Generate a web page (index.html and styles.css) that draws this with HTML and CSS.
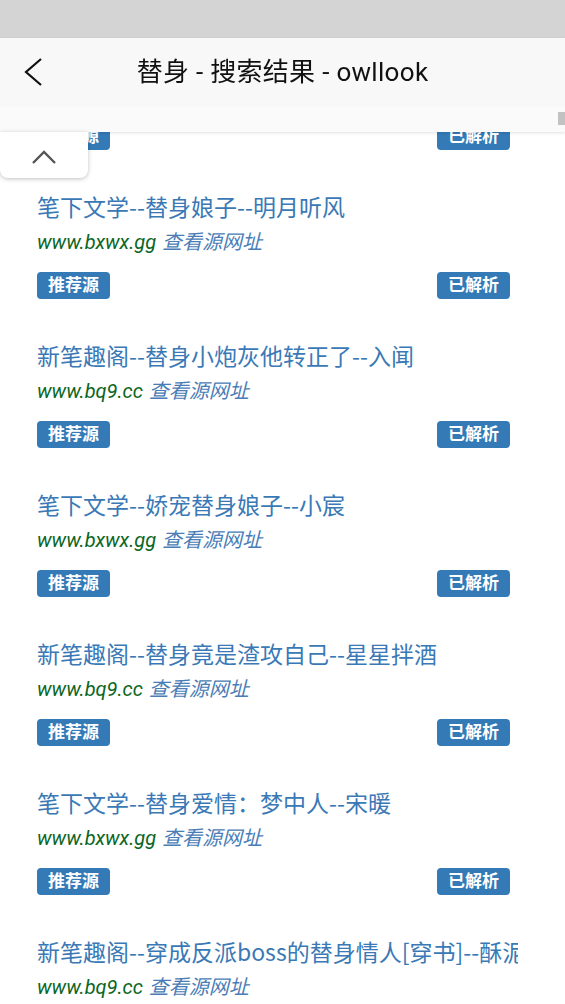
FILE: index.html
```html
<!DOCTYPE html>
<html lang="zh">
<head>
<meta charset="utf-8">
<title>替身 - 搜索结果 - owllook</title>
<link rel="stylesheet" href="styles.css">
</head>
<body>
<div class="top">
  <div class="statusbar"></div>
  <header class="header">
    <div class="bar">
      <svg class="back" width="24" height="34" viewBox="0 0 24 34"><polyline points="18,3 3,16 18,29" fill="none" stroke="#111" stroke-width="2.2"/></svg>
      <h1 class="title">替身 - 搜索结果 - owllook</h1>
    </div>
    <div class="strip"><span class="thumb"></span></div>
  </header>
  <button class="uptop" type="button"><svg width="26" height="16" viewBox="0 0 26 16"><polyline points="2,13 13,2 24,13" fill="none" stroke="#555" stroke-width="2.4"/></svg></button>
</div>

<main class="list">
  <div class="item">
    <div class="name">新笔趣阁--替身</div>
    <div class="url"><span class="host">www.bq9.cc</span> <span class="src">查看源网址</span></div>
    <div class="tags"><span class="tag">推荐源</span><span class="tag">已解析</span></div>
  </div>
  <div class="item">
    <div class="name">笔下文学--替身娘子--明月听风</div>
    <div class="url"><span class="host">www.bxwx.gg</span> <span class="src">查看源网址</span></div>
    <div class="tags"><span class="tag">推荐源</span><span class="tag">已解析</span></div>
  </div>
  <div class="item">
    <div class="name">新笔趣阁--替身小炮灰他转正了--入闻</div>
    <div class="url"><span class="host">www.bq9.cc</span> <span class="src">查看源网址</span></div>
    <div class="tags"><span class="tag">推荐源</span><span class="tag">已解析</span></div>
  </div>
  <div class="item">
    <div class="name">笔下文学--娇宠替身娘子--小宸</div>
    <div class="url"><span class="host">www.bxwx.gg</span> <span class="src">查看源网址</span></div>
    <div class="tags"><span class="tag">推荐源</span><span class="tag">已解析</span></div>
  </div>
  <div class="item">
    <div class="name">新笔趣阁--替身竟是渣攻自己--星星拌酒</div>
    <div class="url"><span class="host">www.bq9.cc</span> <span class="src">查看源网址</span></div>
    <div class="tags"><span class="tag">推荐源</span><span class="tag">已解析</span></div>
  </div>
  <div class="item">
    <div class="name">笔下文学--替身爱情：梦中人--宋暖</div>
    <div class="url"><span class="host">www.bxwx.gg</span> <span class="src">查看源网址</span></div>
    <div class="tags"><span class="tag">推荐源</span><span class="tag">已解析</span></div>
  </div>
  <div class="item">
    <div class="name">新笔趣阁--穿成反派boss的替身情人[穿书]--酥泥</div>
    <div class="url"><span class="host">www.bq9.cc</span> <span class="src">查看源网址</span></div>
    <div class="tags"><span class="tag">推荐源</span><span class="tag">已解析</span></div>
  </div>
</main>
</body>
</html>
```

FILE: styles.css
```css
html, body {
  margin: 0;
  padding: 0;
  background: #fff;
  height: 1004px;
  overflow: hidden;
}
body {
  font-family: Roboto, "Noto Sans CJK SC", sans-serif;
}
.top {
  position: fixed;
  top: 0;
  left: 0;
  right: 0;
  z-index: 5;
}
.statusbar {
  height: 38px;
  background: #d4d4d4;
}
.header {
  background: #f8f8f8;
  box-shadow: 0 1px 3px rgba(0, 0, 0, 0.12);
}
.bar {
  height: 69px;
  display: flex;
  align-items: center;
  justify-content: center;
  position: relative;
}
.back {
  position: absolute;
  left: 23px;
  top: 18px;
}
.title {
  margin: 0 0 2px;
  font-weight: 400;
  font-size: 26px;
  line-height: 34px;
  color: #111;
  letter-spacing: 0.3px;
}
.strip {
  height: 25px;
  background: #fafafa;
  position: relative;
}
.thumb {
  position: absolute;
  right: 0;
  top: 5px;
  width: 7px;
  height: 13px;
  background: #c2c2c2;
}
.uptop {
  position: absolute;
  left: 0;
  top: 132px;
  width: 88px;
  height: 46px;
  border: 0;
  padding: 0;
  background: #fff;
  border-radius: 0 0 8px 8px;
  box-shadow: 0 1px 4px rgba(0, 0, 0, 0.25);
  display: flex;
  align-items: flex-start;
  justify-content: center;
  padding-top: 18px;
  box-sizing: border-box;
}
.list {
  padding-top: 42px;
}
.item {
  padding: 0 47px 41px 37px;
}
.name {
  font-family: "Noto Sans CJK SC", sans-serif;
  font-size: 23px;
  line-height: 34px;
  height: 34px;
  margin: -2px 0 2px;
  color: #3a79b6;
  white-space: nowrap;
  overflow: hidden;
}
.url {
  font-size: 20px;
  line-height: 34px;
  height: 34px;
  font-style: italic;
  white-space: nowrap;
}
.host {
  color: #0b6623;
}
.src {
  color: #4a7db6;
  margin-left: 1px;
}
.tags {
  margin-top: 13px;
  margin-right: 8px;
  display: flex;
  justify-content: space-between;
}
.tag {
  display: inline-block;
  height: 27px;
  line-height: 27px;
  padding: 0 11px;
  background: #337ab7;
  color: #fff;
  font-size: 17px;
  font-weight: 700;
  border-radius: 4px;
}
```
